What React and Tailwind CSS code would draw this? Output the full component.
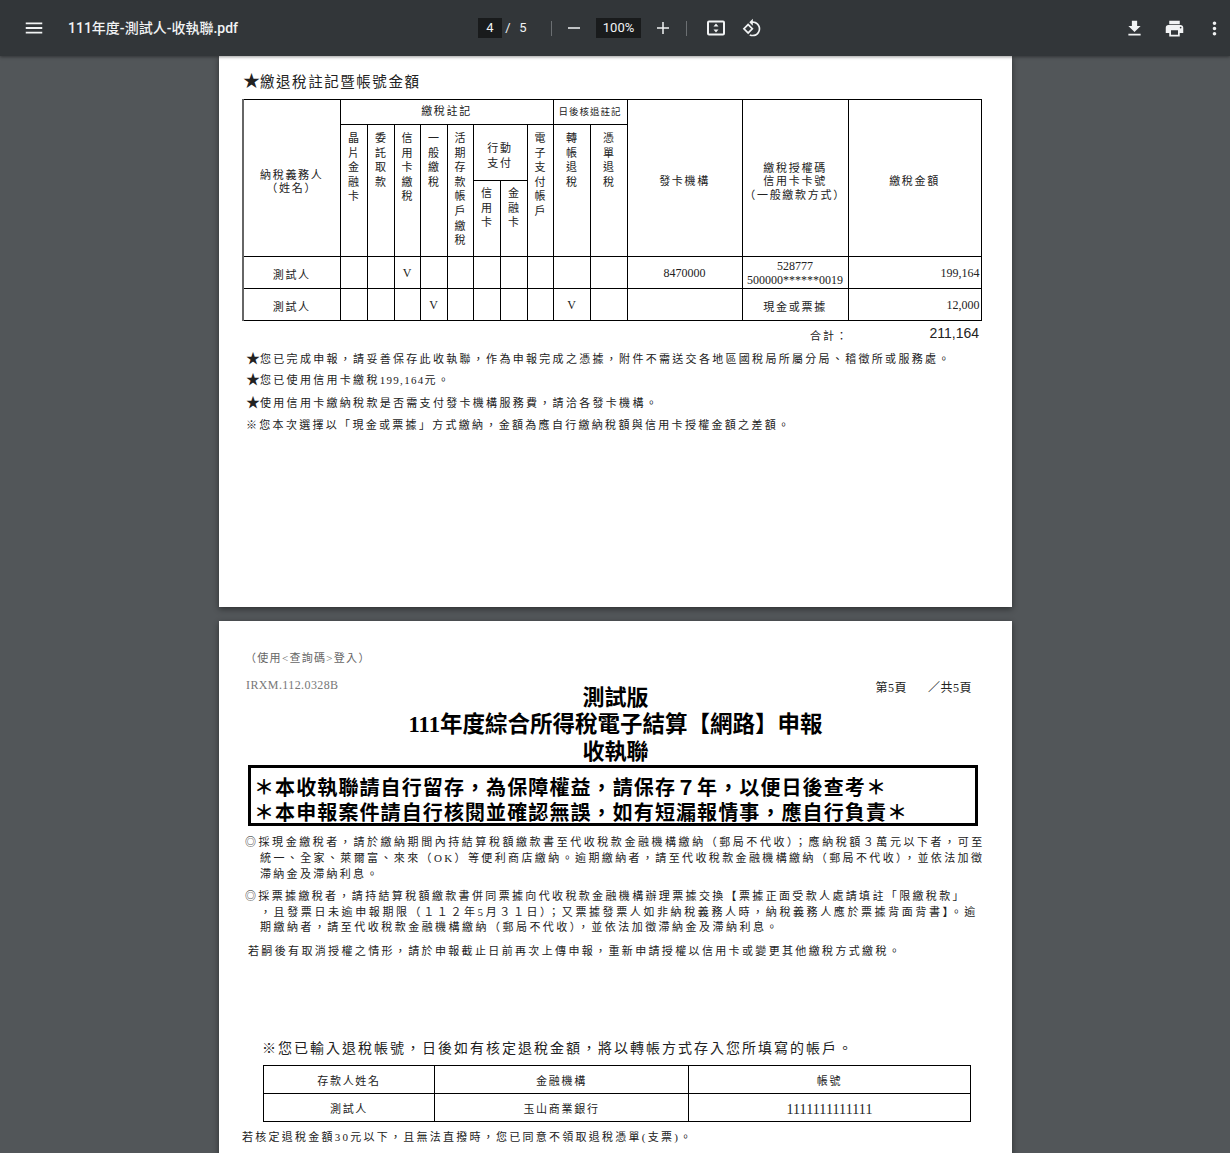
const Icon = ({ d, w = 24, h = 24, vb = "0 0 24 24" }) => (
  <svg width={w} height={h} viewBox={vb} fill="#f1f3f4" className="block shrink-0"><path fillRule="evenodd" d={d} /></svg>
);

const V = ({ t }) => (
  <div className="w-[11px] mx-auto text-[11px] leading-[14.6px] break-all">{t}</div>
);

const Star = ({ c = "★" }) => <span className="text-[14px] tracking-normal">{c}</span>;

const cell = "border border-black p-0 align-top text-center";
const checked = "border border-black p-0 align-middle text-center text-[12px]";
const mid = "border border-black p-0 align-middle text-center text-[11px] leading-[13.5px] tracking-[1.7px]";
const side = "border border-black p-0 pt-[8px] align-middle text-center text-[11px] leading-[13.5px] tracking-[1.7px]";
const first = "border border-black border-l-2 border-l-[#666] p-0 align-middle text-center text-[11px] leading-[13.5px] tracking-[1.7px]";

const widths = [97, 27, 27, 26, 27, 26, 27, 27, 26, 37, 37, 115, 106, 133];

function TaxTable() {
  return (
    <table className="-ml-px w-[738px] table-fixed border-collapse text-[#222]">
      <colgroup>
        {widths.map((w, i) => <col key={i} style={{ width: w }} />)}
      </colgroup>
      <tbody>
        <tr className="h-[25px]">
          <td rowSpan={3} className={`${first} pt-[8px]`}>納稅義務人<br />（姓名）</td>
          <td colSpan={8} className={`${mid} text-[10px]`}>繳稅註記</td>
          <td colSpan={2} className="border border-black p-0 align-middle text-center text-[9.5px] tracking-[1px] whitespace-nowrap">日後核退註記</td>
          <td rowSpan={3} className={side}>發卡機構</td>
          <td rowSpan={3} className={side}>繳稅授權碼<br />信用卡卡號<br />（一般繳款方式）</td>
          <td rowSpan={3} className={side}>繳稅金額</td>
        </tr>
        <tr className="h-[56px]">
          {["晶片金融卡", "委託取款", "信用卡繳稅", "一般繳稅", "活期存款帳戶繳稅"].map((t) => (
            <td key={t} rowSpan={2} className={`${cell} pt-[6px]`}><V t={t} /></td>
          ))}
          <td colSpan={2} className="border border-black p-0 pt-[6px] align-middle text-center text-[11px] leading-[15px] tracking-[1.7px]">行動<br />支付</td>
          <td rowSpan={2} className={`${cell} pt-[6px]`}><V t="電子支付帳戶" /></td>
          <td rowSpan={2} className={`${cell} pt-[6px]`}><V t="轉帳退稅" /></td>
          <td rowSpan={2} className={`${cell} pt-[6px]`}><V t="憑單退稅" /></td>
        </tr>
        <tr className="h-[76px]">
          <td className={`${cell} pt-[5px]`}><V t="信用卡" /></td>
          <td className={`${cell} pt-[5px]`}><V t="金融卡" /></td>
        </tr>
        <tr className="h-[32px]">
          <td className={`${first} pt-[6px]`}>測試人</td>
          <td className={cell}></td>
          <td className={cell}></td>
          <td className={checked}>V</td>
          <td className={cell}></td><td className={cell}></td><td className={cell}></td><td className={cell}></td><td className={cell}></td><td className={cell}></td><td className={cell}></td>
          <td className="border border-black p-0 align-middle text-center text-[12px]">8470000</td>
          <td className="border border-black p-0 pt-px align-middle text-center text-[12px] leading-[14px] whitespace-nowrap">528777<br />500000******0019</td>
          <td className="border border-black p-0 pr-px align-middle text-right text-[12px]">199,164</td>
        </tr>
        <tr className="h-[32px]">
          <td className={`${first} pt-[6px]`}>測試人</td>
          <td className={cell}></td><td className={cell}></td><td className={cell}></td>
          <td className={checked}>V</td>
          <td className={cell}></td><td className={cell}></td><td className={cell}></td><td className={cell}></td>
          <td className={checked}>V</td>
          <td className={cell}></td><td className={cell}></td>
          <td className={`${mid} pt-[6px]`}>現金或票據</td>
          <td className="border border-black p-0 pr-px align-middle text-right text-[12px]">12,000</td>
        </tr>
      </tbody>
    </table>
  );
}

function Page1() {
  return (
    <section className="h-[551px] bg-white shadow-[0_2px_6px_rgba(0,0,0,0.45)] pl-[24px] pt-[17px] text-[#222]">
      <div className="text-[14.5px] leading-[18px] tracking-[1.55px] h-[26px] whitespace-nowrap">
        <span className="text-[17px] tracking-normal">★</span>繳退稅註記暨帳號金額
      </div>
      <TaxTable />
      <div className="flex h-[26px] w-[738px] items-start">
        <div className="ml-[567px] mt-[8px] text-[11px] leading-[14px] tracking-[2px] whitespace-nowrap">合計：</div>
        <div className="ml-auto mr-[2px] mt-[4px] text-[14px] leading-[16px] font-['Liberation_Sans']">211,164</div>
      </div>
      <div className="ml-[3px] text-[11px] leading-[16px] tracking-[2.3px] whitespace-nowrap">
        <div className="mt-[4px]"><Star />您已完成申報，請妥善保存此收執聯，作為申報完成之憑據，附件不需送交各地區國稅局所屬分局、稽徵所或服務處。</div>
        <div className="mt-[5px]"><Star />您已使用信用卡繳稅<span className="tracking-[1.3px]">199,164</span>元。</div>
        <div className="mt-[7px]"><Star />使用信用卡繳納稅款是否需支付發卡機構服務費，請洽各發卡機構。</div>
        <div className="mt-[6px]">※您本次選擇以「現金或票據」方式繳納，金額為應自行繳納稅額與信用卡授權金額之差額。</div>
      </div>
    </section>
  );
}

function Page2() {
  return (
    <section className="mt-[14px] h-[700px] bg-white shadow-[0_2px_6px_rgba(0,0,0,0.45)] pl-[24px] pr-[30px] pt-[30px] text-[#222]">
      <div className="ml-[2px] text-[11px] leading-[14px] tracking-[1.3px] text-[#666] whitespace-nowrap">（使用&lt;查詢碼&gt;登入）</div>
      <div className="grid grid-cols-[1fr_auto_1fr] -mr-[30px] pr-[24px] -ml-[24px] pl-[24px]">
        <div className="mt-[12px] ml-[3px] text-[12px] leading-[16px] text-[#777] tracking-[0.4px] whitespace-nowrap">IRXM.112.0328B</div>
        <div className="mt-[19px] text-center font-bold text-black">
          <div className="text-[22px] leading-[27px]">測試版</div>
          <div className="text-[22.5px] leading-[27px] whitespace-nowrap">111年度綜合所得稅電子結算【網路】申報</div>
          <div className="text-[22px] leading-[27px]">收執聯</div>
        </div>
        <div className="mt-[15px] mr-[16px] text-right text-[12px] leading-[16px] tracking-[0.5px] whitespace-pre">第5頁      ／共5頁</div>
      </div>
      <div className="ml-[5px] mt-0 h-[61px] w-[730px] border-[3px] border-black pl-[3px] text-[20px] leading-[25px] font-bold text-black tracking-[1.1px] whitespace-nowrap">
        <div className="mt-[8px]">＊本收執聯請自行留存，為保障權益，請保存７年，以便日後查考＊</div>
        <div>＊本申報案件請自行核閱並確認無誤，如有短漏報情事，應自行負責＊</div>
      </div>
      <div className="ml-[2px] mt-[8px] text-[11px] leading-[16px] whitespace-nowrap">
        <div className="tracking-[2.55px]">◎採現金繳稅者，請於繳納期間內持結算稅額繳款書至代收稅款金融機構繳納（郵局不代收）；應納稅額３萬元以下者，可至</div>
        <div className="pl-[15px] tracking-[2.38px]">統一、全家、萊爾富、來來（OK）等便利商店繳納。逾期繳納者，請至代收稅款金融機構繳納（郵局不代收），並依法加徵</div>
        <div className="pl-[15px] tracking-[2.3px]">滯納金及滯納利息。</div>
        <div className="mt-[7px] leading-[15.5px] tracking-[2.35px]">◎採票據繳稅者，請持結算稅額繳款書併同票據向代收稅款金融機構辦理票據交換【票據正面受款人處請填註「限繳稅款」</div>
        <div className="pl-[15px] leading-[15.5px] tracking-[2.6px]">，且發票日未逾申報期限（１１２年5月３１日）；又票據發票人如非納稅義務人時，納稅義務人應於票據背面背書】。逾</div>
        <div className="pl-[15px] leading-[15.5px] tracking-[2.47px]">期繳納者，請至代收稅款金融機構繳納（郵局不代收），並依法加徵滯納金及滯納利息。</div>
        <div className="mt-[7px] pl-[3px] tracking-[2.35px]">若嗣後有取消授權之情形，請於申報截止日前再次上傳申報，重新申請授權以信用卡或變更其他繳稅方式繳稅。</div>
      </div>
      <div className="ml-[19px] mt-[80px] text-[14px] leading-[20px] tracking-[2px] whitespace-nowrap">※您已輸入退稅帳號，日後如有核定退稅金額，將以轉帳方式存入您所填寫的帳戶。</div>
      <table className="ml-[20px] mt-[6px] w-[707px] table-fixed border-collapse text-center text-[11px] tracking-[1.7px] text-[#222]">
        <colgroup><col className="w-[171px]" /><col className="w-[254px]" /><col className="w-[282px]" /></colgroup>
        <tbody>
          <tr className="h-[28px]">
            <td className="border border-black p-0 align-middle pt-[5px]">存款人姓名</td>
            <td className="border border-black p-0 align-middle pt-[5px]">金融機構</td>
            <td className="border border-black p-0 align-middle pt-[5px]">帳號</td>
          </tr>
          <tr className="h-[28px]">
            <td className="border border-black p-0 align-middle pt-[5px]">測試人</td>
            <td className="border border-black p-0 align-middle pt-[5px]">玉山商業銀行</td>
            <td className="border border-black p-0 align-middle pt-[5px] text-[14px] tracking-[0.1px]">1111111111111</td>
          </tr>
        </tbody>
      </table>
      <div className="-ml-px mt-[7px] text-[11px] leading-[16px] tracking-[2.25px] whitespace-nowrap">若核定退稅金額30元以下，且無法直撥時，您已同意不領取退稅憑單(支票)。</div>
    </section>
  );
}

export default function App() {
  return (
    <div className="flex h-[1153px] w-[1230px] flex-col overflow-hidden bg-[#525659] font-['Liberation_Serif','Noto_Sans_CJK_TC',serif]">
      <header className="relative z-10 flex h-[56px] shrink-0 items-center bg-[#323639] text-[#f1f3f4] font-['Roboto','Noto_Sans_CJK_TC',sans-serif] shadow-[0_1px_3px_rgba(0,0,0,0.4)]">
        <div className="ml-[23px] w-[23px]"><Icon w={22} h={22} d="M3 18h18v-2H3v2zm0-5h18v-2H3v2zm0-7v2h18V6H3z" /></div>
        <div className="ml-[22px] w-[410px] whitespace-nowrap text-[14px] font-medium">111年度-測試人-收執聯.pdf</div>
        <div className="flex h-[20px] w-[24px] items-center justify-center bg-[#191b1c] text-[13px]">4</div>
        <div className="w-[12px] text-center text-[13px]">/</div>
        <div className="ml-[3px] w-[12px] text-center text-[13px]">5</div>
        <div className="ml-[22px] h-[15px] w-px bg-[#6b6f72]"></div>
        <div className="ml-[10px]"><Icon d="M18 12.750H6v-1.500h12z" /></div>
        <div className="ml-[10px] flex h-[20px] w-[45px] items-center justify-center bg-[#191b1c] text-[13px]">100%</div>
        <div className="ml-[10px]"><Icon d="M18 12.750h-5.250V18h-1.500v-5.250H6v-1.500h5.250V6h1.500v5.250H18z" /></div>
        <div className="ml-[11px] h-[15px] w-px bg-[#6b6f72]"></div>
        <div className="ml-[17px]"><Icon d="M5 4.500h14a2 2 0 0 1 2 2v11a2 2 0 0 1-2 2H5a2 2 0 0 1-2-2v-11a2 2 0 0 1 2-2zM5 6.500v11h14v-11H5zM12 7.500l2.500 3h-5l2.500-3zM12 16.500l-2.500-3h5l-2.500 3z" /></div>
        <div className="ml-[14px]"><Icon w={20} h={20} d="M7.340 6.410L.860 12.900l6.490 6.480 6.490-6.480-6.500-6.490zM3.690 12.900l3.660-3.660L11 12.900l-3.660 3.660-3.650-3.660zm15.670-6.260C17.610 4.880 15.300 4 13 4V.760L8.760 5 13 9.240V6c1.790 0 3.580.680 4.950 2.050 2.730 2.730 2.730 7.170 0 9.900C16.580 19.320 14.790 20 13 20c-.970 0-1.940-.210-2.840-.610l-1.490 1.490C10.020 21.620 11.510 22 13 22c2.300 0 4.610-.880 6.360-2.640 3.520-3.510 3.520-9.210 0-12.720z" /></div>
        <div className="ml-auto flex items-center">
          <div className="flex w-[24px] justify-center"><Icon w={21} h={21} d="M19 9h-4V3H9v6H5l7 7 7-7zM5 18v2h14v-2H5z" /></div>
          <div className="ml-[16px] flex w-[24px] justify-center"><Icon w={21} h={21} d="M19 8H5c-1.660 0-3 1.340-3 3v6h4v4h12v-4h4v-6c0-1.660-1.340-3-3-3zm-3 11H8v-5h8v5zm3-7c-.550 0-1-.450-1-1s.450-1 1-1 1 .450 1 1-.450 1-1 1zm-1-9H6v4h12V3z" /></div>
          <div className="ml-[16px] mr-[4px] flex w-[24px] justify-center"><Icon w={21} h={21} d="M12 8c1.100 0 2-.900 2-2s-.900-2-2-2-2 .900-2 2 .900 2 2 2zm0 2c-1.100 0-2 .900-2 2s.900 2 2 2 2-.900 2-2-.900-2-2-2zm0 6c-1.100 0-2 .900-2 2s.900 2 2 2 2-.900 2-2-.900-2-2-2z" /></div>
        </div>
      </header>
      <main className="min-h-0 flex-1 overflow-hidden pl-[219px] pr-[218px]">
        <Page1 />
        <Page2 />
      </main>
    </div>
  );
}
